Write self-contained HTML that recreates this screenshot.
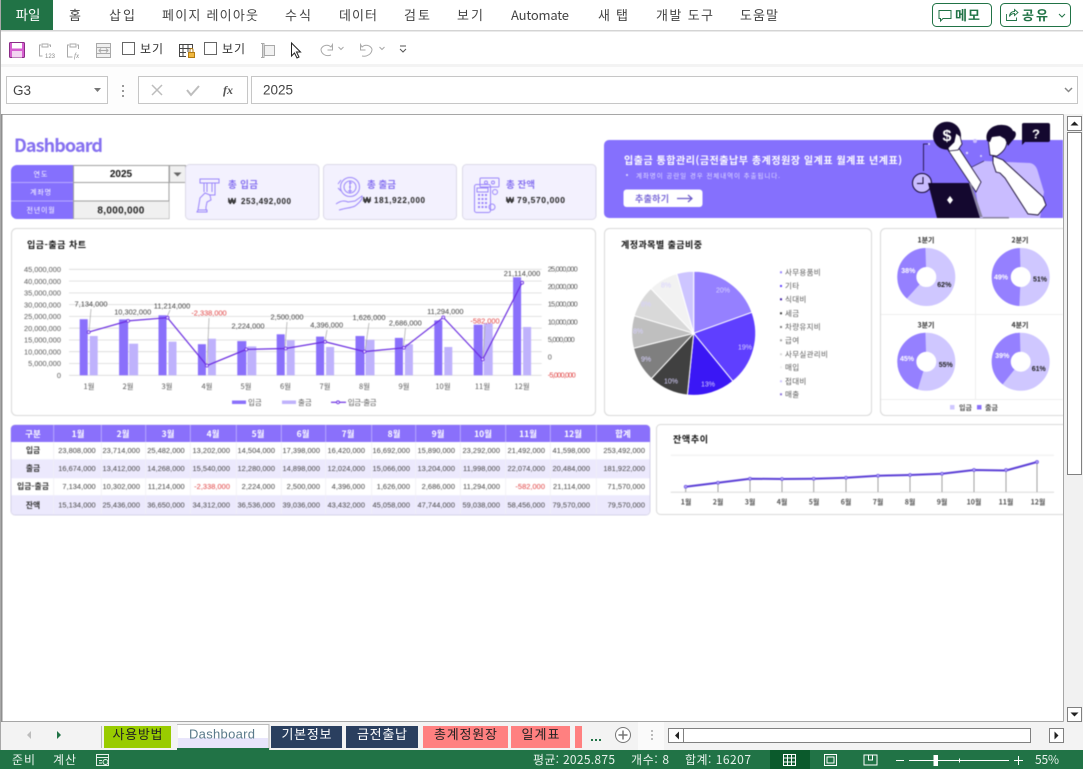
<!DOCTYPE html>
<html lang="ko"><head><meta charset="utf-8"><title>Dashboard</title>
<style>
html,body{margin:0;padding:0;background:#fff;width:1083px;height:769px;overflow:hidden}
svg{display:block;position:absolute;left:0;top:0;font-family:"Liberation Sans","Noto Sans CJK KR",sans-serif}
.ui{fill:#333;font-size:13px;font-family:"Liberation Sans","Noto Sans CJK KR",sans-serif}
.k{font-family:"Noto Sans CJK KR","Liberation Sans",sans-serif}
.ax{font-size:7.4px;fill:#595959}
.mo{font-size:7.5px;fill:#595959;text-anchor:middle}
.dl{font-size:7.4px;fill:#404040;text-anchor:middle}
.t{font-size:7.4px;fill:#444;text-anchor:end;letter-spacing:.05px}
.red{fill:#e04040 !important}
.th{font-size:8.5px;fill:#fff;text-anchor:middle;font-weight:bold}
.rh{font-size:7.8px;fill:#333;text-anchor:middle;font-weight:bold}
.ttl{font-size:9px;fill:#111;font-weight:bold}
.pl{font-size:7px;fill:#d8d2ff;text-anchor:middle}
.lg{font-size:7.5px;fill:#595959}
.dq{font-size:7px;font-weight:bold;text-anchor:middle}
.sh{font-size:13px;text-anchor:middle}
.st{font-size:12px;fill:#e8f2ec}
#dash{filter:blur(.42px)}
</style></head><body>
<svg width="1083" height="769" viewBox="0 0 1083 769" xmlns="http://www.w3.org/2000/svg">
<!-- chrome bg -->
<rect width="1083" height="769" fill="#fff"/>
<rect x="0" y="0" width="53" height="30" fill="#217346"/>
<rect y="30" width="1083" height="1.500" fill="#d4d4d4"/>
<rect y="64" width="1083" height="3" fill="#f3f3f3"/>
<rect y="67" width="1083" height="47" fill="#fdfdfd"/>
<rect x="0" y="0" width="1" height="769" fill="#a8a8a8"/>
<text x="28" y="20" class="k" text-anchor="middle" font-size="13.500" fill="#fff">파일</text>
<g class="k" font-size="13" fill="#444">
<text x="69" y="20" textLength="13">홈</text>
<text x="109" y="20" textLength="26">삽입</text>
<text x="162" y="20" textLength="96">페이지 레이아웃</text>
<text x="285" y="20" textLength="26">수식</text>
<text x="339" y="20" textLength="38">데이터</text>
<text x="404" y="20" textLength="26">검토</text>
<text x="457" y="20" textLength="26">보기</text>
<text x="511" y="20" textLength="58">Automate</text>
<text x="598" y="20" textLength="30">새 탭</text>
<text x="656" y="20" textLength="57">개발 도구</text>
<text x="740" y="20" textLength="38">도움말</text>
</g>
<rect x="932.500" y="3.500" width="59" height="23" rx="4" fill="#fff" stroke="#217346"/>
<path d="M939 10.500h12v8h-8l-2.500 2.500v-2.500h-1.500z" fill="none" stroke="#217346"/>
<text x="955" y="20" class="k" font-size="13" font-weight="bold" fill="#217346" textLength="25">메모</text>
<rect x="1000.500" y="3.500" width="70" height="23" rx="4" fill="#fff" stroke="#217346"/>
<path d="M1006.500 14v6.500h10v-3M1009.500 16.500c0-3 2-5 5-5v-2l3.500 3-3.500 3v-2c-2.500 0-4 1-5 3z" fill="none" stroke="#217346" stroke-width=".9"/>
<text x="1022" y="20" class="k" font-size="13" font-weight="bold" fill="#217346" textLength="26">공유</text>
<path d="M1059 14l3 3 3-3" fill="none" stroke="#217346"/>

<!-- quick access toolbar -->
<g fill="none">
<rect x="9.500" y="42.500" width="15" height="15" rx="1" fill="#d65fd0" stroke="#8a2c86"/>
<rect x="12" y="43" width="10" height="5.500" fill="#fff"/>
<rect x="12" y="51" width="10" height="6.500" fill="#f3d4f1"/>
<g stroke="#a9a9a9">
<path d="M41 45h-1.500v11h3M49 45h1.500v2M42 44h6v3h-6z"/>
<path d="M69 45h-1.500v12h5M77 45h1.500v4M70 44h6v3h-6z"/>
<rect x="96.500" y="43.500" width="14" height="14" fill="#f0f0f0"/>
<path d="M96 47.500h15M96 53.500h15M99 50.500h9M101 48.500l-2 2 2 2M106 48.500l2 2-2 2"/>
<path d="M261 43.500h3v14h-3M262.500 44v13"/>
<rect x="264.500" y="45.500" width="10" height="10" fill="#f2f2f2"/>
<path d="M321 49c2-4 7-5 10-2l1.500-2.500v5.500h-5M321 49c0 5 5 8 10 6"/>
<path d="M372 49c-2-4-7-5-10-2l-1.500-2.500v5.500h5M372 49c0 5-5 8-10 7"/>
<path d="M338.500 47l2.500 2.500 2.500-2.500M379.500 47l2.500 2.500 2.500-2.500"/>
</g>
<text x="45" y="58" font-size="6" fill="#888">123</text>
<text x="74" y="58" font-size="7" font-style="italic" font-family="Liberation Serif" fill="#888">fx</text>
<rect x="122.500" y="42.500" width="12" height="12" stroke="#666" fill="#fff"/>
<rect x="204.500" y="42.500" width="12" height="12" stroke="#666" fill="#fff"/>
<path d="M179 44.500h14M179 48.500h14M179 52.500h7M179 56.500h7M183 44v13M188 44v8M179.500 44v13M192.500 44v5" stroke="#444"/>
<rect x="188.500" y="52.500" width="6" height="5" fill="#f0b840" stroke="#b37a10"/>
<path d="M190 52v-2a1.500 1.500 0 0 1 3 0v2" stroke="#b37a10"/>
<path d="M291.500 43v13l3-3 2.500 5 2-1-2.500-5h4z" fill="#fff" stroke="#222"/>
<path d="M400 46h6M400 49l3 3 3-3" stroke="#555"/>
</g>
<text x="140" y="53" class="k" font-size="12" fill="#333" textLength="23">보기</text>
<text x="222" y="53" class="k" font-size="12" fill="#333" textLength="23">보기</text>

<!-- formula bar -->
<rect x="6.500" y="76.500" width="101" height="27" fill="#fff" stroke="#c6c6c6"/>
<text x="13" y="95" font-size="13.500" fill="#444">G3</text>
<path d="M94 88h7l-3.500 4z" fill="#777"/>
<g fill="#999"><rect x="122" y="85" width="2" height="2"/><rect x="122" y="90" width="2" height="2"/><rect x="122" y="95" width="2" height="2"/></g>
<rect x="138.500" y="76.500" width="109" height="27" fill="#fff" stroke="#c6c6c6"/>
<path d="M152 85l10 10M162 85l-10 10" stroke="#bdbdbd" stroke-width="1.500"/>
<path d="M187 90l4 5 8-9" stroke="#bdbdbd" stroke-width="2" fill="none"/>
<text x="223" y="94" font-size="12" font-style="italic" font-weight="bold" font-family="Liberation Serif" fill="#555">fx</text>
<rect x="251.500" y="76.500" width="826" height="27" fill="#fff" stroke="#c6c6c6"/>
<text x="263" y="94.500" font-size="13.500" fill="#444">2025</text>
<path d="M1065 88l3.500 3.500 3.500-3.500" fill="none" stroke="#888" stroke-width="1.500"/>

<!-- sheet background -->
<rect x="1" y="114" width="1082" height="636" fill="#f2f2f2"/>
<rect x="2" y="115" width="1061" height="606" fill="#fff"/>
<path d="M1.500 114.500H1063.500V721.500H1.500z" fill="none" stroke="#a6a6a6"/>
<rect x="1" y="114" width="1.500" height="608" fill="#8f8f8f"/>

<svg id="dash" x="0" y="0" width="1063" height="721" viewBox="0 0 1063 721" style="overflow:hidden">
<text x="14" y="152" class="k" font-size="18" font-weight="bold" fill="#8570f0" textLength="89">Dashboard</text>

<!-- filter box -->
<path d="M73.500 165H17a6 6 0 0 0-6 6v42a6 6 0 0 0 6 6h56.500z" fill="#8570fd"/>
<path d="M11 182.500h62M11 201h62" stroke="#c9bfff" stroke-width=".8"/>
<rect x="73.500" y="165.500" width="95.500" height="53" fill="#fff" stroke="#a0a0a0"/>
<rect x="74" y="201" width="95" height="17.500" fill="#f0f0f0"/>
<path d="M73.500 182.500H169M73.500 201H169" stroke="#a0a0a0"/>
<rect x="169.500" y="165.500" width="16" height="17" fill="#f0f0f0" stroke="#a0a0a0"/>
<path d="M173.500 172.500h8l-4 4z" fill="#666"/>
<g class="k" font-size="7" fill="#fff" text-anchor="middle">
<text x="41" y="176.500" letter-spacing="1">연도</text><text x="41" y="194.500" letter-spacing=".8">계좌명</text><text x="41" y="212.500" letter-spacing=".8">전년이월</text>
</g>
<text x="121" y="177" font-size="10" font-weight="bold" fill="#111" text-anchor="middle">2025</text>
<text x="121" y="213.500" font-size="10" font-weight="bold" fill="#222" text-anchor="middle" letter-spacing=".3">8,000,000</text>

<!-- cards -->
<g fill="#f3f1fe" stroke="#dcdae8">
<rect x="185.500" y="164.500" width="133.500" height="55" rx="4"/>
<rect x="323.500" y="164.500" width="133" height="55" rx="4"/>
<rect x="462.500" y="164.500" width="133.500" height="55" rx="4"/>
</g>
<g fill="none" stroke="#9a85fb" stroke-width="1">
<path d="M200 179h19v4h-19zM204 183v9M215 183v12h-6M207 183v9M212 183v9"/>
<path d="M198 210l2-12 5-5 5 2 1 5-4 2-1 5v3M198 210h9v2h-10z"/>
<circle cx="350" cy="187" r="9.500"/><circle cx="350" cy="187" r="6"/>
<path d="M349 183h3M349 187h2M348 191h4M350 181v12M338 184l3-4M341 191l-3-3" />
<path d="M336 204c4-3 8-4 12-2l7-1 7-5c1 3-3 7-7 10-4 2-9 2-12 3l-4 1"/>
<rect x="474.500" y="184.500" width="16" height="28" rx="2"/><rect x="477" y="188" width="11" height="4"/>
<path d="M478 195h9M478 199h9M478 203h9M478 207h9" stroke-dasharray="2 1.500" stroke-width="2"/>
<rect x="480" y="178" width="19" height="9" rx="1"/><circle cx="486" cy="182.500" r="1.500"/><circle cx="493" cy="182.500" r="1.500"/>
<circle cx="495" cy="192" r="2.500"/><circle cx="492" cy="207" r="3"/>
</g>
<g class="k" font-size="9.500" font-weight="bold" fill="#8570f0">
<text x="228" y="188" textLength="30">총 입금</text>
<text x="367" y="188" textLength="29">총 출금</text>
<text x="506" y="188" textLength="29">총 잔액</text>
</g>
<g font-size="8.500" font-weight="bold" fill="#222">
<text x="228" y="204">₩</text><text x="241" y="204" textLength="50" font-size="8">253,492,000</text>
<text x="363" y="203">₩</text><text x="374" y="203" textLength="51" font-size="8">181,922,000</text>
<text x="506" y="203">₩</text><text x="517" y="203" textLength="48">79,570,000</text>
</g>

<!-- banner -->
<path d="M609 140H1063V218H609a5 5 0 0 1-5-5V145a5 5 0 0 1 5-5z" fill="#8570fd"/>
<text x="624" y="164" class="k" font-size="10" font-weight="bold" fill="#fff" textLength="278">입출금 통합관리(금전출납부 총계정원장 일계표 월계표 년계표)</text>
<circle cx="627" cy="175" r="1" fill="#e5e0ff"/>
<text x="636" y="178" class="k" font-size="6.500" fill="#e0dbff" textLength="144">계좌명이 공란일 경우 전체내역이 추출됩니다.</text>
<rect x="623.500" y="189.500" width="79" height="17.500" rx="3" fill="#fff"/>
<text x="635" y="202" class="k" font-size="9" font-weight="bold" fill="#7a68d8" textLength="34">추출하기</text>
<path d="M677 198.500h15M688 195l4 3.500-4 3.500" fill="none" stroke="#6a58c8" stroke-width="1.200"/>
<!-- illustration -->
<path d="M928 144h-4.500v27" fill="none" stroke="#14082f" stroke-width=".8"/>
<circle cx="929" cy="144" r="1" fill="#e0dbff"/><circle cx="975" cy="141" r="2" fill="#c9bcff"/><circle cx="967" cy="153" r="1.200" fill="#e0dbff"/><circle cx="981" cy="156" r="1" fill="#e0dbff"/>
<circle cx="922" cy="183" r="9.500" fill="#c9bcff" stroke="#14082f"/>
<path d="M923 177v6.500h-6" fill="none" stroke="#14082f"/>
<!-- shirt -->
<path d="M972 167L984 161 1030 163C1035 164 1037 168 1038 172L1044 192 1040 218H980z" fill="#c9bcff"/>
<path d="M972 167L984 161" stroke="#14082f" stroke-width=".6" fill="none"/>
<!-- left arm -->
<path d="M948 150L958 147 981 182 976 192z" fill="#fff" stroke="#14082f" stroke-width=".8"/>
<circle cx="947" cy="135.700" r="14" fill="#14082f"/>
<text x="947" y="141" font-size="16" font-weight="bold" fill="#fff" text-anchor="middle">$</text>
<path d="M956 133l4 3 2 8-4 6-9 1-1-3 6-6z" fill="#fff" stroke="#14082f" stroke-width=".8"/>
<!-- head -->
<path d="M988 138L990 155 997 156C1003 152 1007 148 1007 140L1000 134z" fill="#fff" stroke="#14082f" stroke-width=".8"/>
<path d="M987 141C984 131 993 124 1003 125 1008 125 1012 128 1013 131 1017 131 1017 137 1012 141L1008 146 1005 139 1000 136 992 137 990 142z" fill="#14082f"/>
<path d="M1022 124a2 2 0 0 1 2-1h24a2 2 0 0 1 2 2v15a2 2 0 0 1-2 2h-23l-3 3z" fill="#14082f"/>
<text x="1036" y="138.500" font-size="13" font-weight="bold" fill="#fff" text-anchor="middle">?</text>
<!-- laptop -->
<path d="M928 183h41l11 35h-43z" fill="#14082f"/>
<path d="M969 183l11 35h3l-12-35zM980 217h29v1.500h-29z" fill="#8a85a0"/>
<path d="M950 196l3 4-3 4-3-4z" fill="#fff"/>
<!-- right forearm -->
<path d="M993 156L1003 160 1043 197 1046 205 1038 215 1028 214 1005 178 1000 173 996 172 993 163z" fill="#fff" stroke="#14082f" stroke-width=".9"/>

<!-- chart panel -->
<rect x="11.500" y="228.500" width="584" height="187" rx="5" fill="#fff" stroke="#d9d9d9"/>
<text x="27" y="248" class="ttl k" textLength="59">입금-출금 차트</text>
<g stroke="#d9d9d9" stroke-width=".8">
<path d="M69 269.300h472.700M69 281.100h472.700M69 292.900h472.700M69 304.600h472.700M69 316.400h472.700M69 328.200h472.700M69 340h472.700M69 351.700h472.700M69 363.500h472.700M69 375.300h472.700"/>
</g>
<g class="ax" text-anchor="end">
<text x="61" y="272">45,000,000</text><text x="61" y="283.800">40,000,000</text><text x="61" y="295.600">35,000,000</text><text x="61" y="307.300">30,000,000</text><text x="61" y="319.100">25,000,000</text><text x="61" y="330.900">20,000,000</text><text x="61" y="342.700">15,000,000</text><text x="61" y="354.400">10,000,000</text><text x="61" y="366.200">5,000,000</text><text x="61" y="378">0</text>
</g>
<g class="ax">
<text x="547.700" y="271.400" textLength="30">25,000,000</text><text x="547.700" y="289" textLength="30">20,000,000</text><text x="547.700" y="306.700" textLength="30">15,000,000</text><text x="547.700" y="324.400" textLength="30">10,000,000</text><text x="547.700" y="342" textLength="27">5,000,000</text><text x="547.700" y="359.700">0</text><text x="547.700" y="377.400" textLength="28" class="ax" style="fill:#e04040">-5,000,000</text>
</g>
<g fill="#8a70fb">
<rect x="79.700" y="319.200" width="8" height="56.100"/><rect x="119.100" y="319.400" width="9" height="55.900"/><rect x="158.500" y="315.300" width="8" height="60"/><rect x="197.900" y="344.200" width="8" height="31.100"/><rect x="237.300" y="341.100" width="9" height="34.200"/><rect x="276.700" y="334.300" width="8" height="41"/><rect x="316.100" y="336.600" width="8" height="38.700"/><rect x="355.500" y="336" width="9" height="39.300"/><rect x="394.900" y="337.900" width="8" height="37.400"/><rect x="434.300" y="320.400" width="8" height="54.900"/><rect x="473.700" y="324.700" width="9" height="50.600"/><rect x="513.100" y="277.300" width="8" height="98"/>
</g>
<g fill="#bfb2fc">
<rect x="89.700" y="336" width="8" height="39.300"/><rect x="129.100" y="343.700" width="9" height="31.600"/><rect x="168.500" y="341.700" width="8" height="33.600"/><rect x="207.900" y="338.700" width="8" height="36.600"/><rect x="247.300" y="346.400" width="9" height="28.900"/><rect x="286.700" y="340.200" width="8" height="35.100"/><rect x="326.100" y="347" width="8" height="28.300"/><rect x="365.500" y="339.800" width="9" height="35.500"/><rect x="404.900" y="344.200" width="8" height="31.100"/><rect x="444.300" y="347" width="8" height="28.300"/><rect x="483.700" y="323.300" width="9" height="52"/><rect x="523.100" y="327" width="8" height="48.300"/>
</g>
<g stroke="#a6a6a6" stroke-width=".7" fill="none">
<path d="M91 309l-2 23M170 310l-3 7M209 318l-2 47M287 322l-2 26M327 330l-2 11M369 323l-4 28M405.500 328l-2 19M485 326l-2 33"/>
</g>
<polyline points="88.700,332.100 128.100,320.900 167.500,317.700 206.900,365.600 246.300,349.400 285.700,348.500 325.100,341.800 364.500,351.600 403.900,347.800 443.300,317.400 482.700,359.400 522.100,282.700" fill="none" stroke="#6a2ce0" stroke-width="1.200"/>
<g fill="#e8e0ff" stroke="#6a2ce0" stroke-width=".8">
<circle cx="88.700" cy="332.100" r="1.500"/><circle cx="128.100" cy="320.900" r="1.500"/><circle cx="167.500" cy="317.700" r="1.500"/><circle cx="206.900" cy="365.600" r="1.500"/><circle cx="246.300" cy="349.400" r="1.500"/><circle cx="285.700" cy="348.500" r="1.500"/><circle cx="325.100" cy="341.800" r="1.500"/><circle cx="364.500" cy="351.600" r="1.500"/><circle cx="403.900" cy="347.800" r="1.500"/><circle cx="443.300" cy="317.400" r="1.500"/><circle cx="482.700" cy="359.400" r="1.500"/><circle cx="522.100" cy="282.700" r="1.500"/>
</g>
<g class="dl">
<text x="91" y="306.400">7,134,000</text><text x="132.700" y="314.700">10,302,000</text><text x="172" y="308.400">11,214,000</text><text x="209" y="315.400" class="dl red">-2,338,000</text><text x="248" y="328.700">2,224,000</text><text x="287" y="319.400">2,500,000</text><text x="326.700" y="327.400">4,396,000</text><text x="369" y="320">1,626,000</text><text x="405.300" y="325.400">2,686,000</text><text x="445.300" y="314">11,294,000</text><text x="485" y="323.400" class="dl red">-582,000</text><text x="522" y="276">21,114,000</text>
</g>
<g class="mo k">
<text x="89" y="389">1월</text><text x="128" y="389">2월</text><text x="167" y="389">3월</text><text x="207" y="389">4월</text><text x="246" y="389">5월</text><text x="285.500" y="389">6월</text><text x="325" y="389">7월</text><text x="364.500" y="389">8월</text><text x="404" y="389">9월</text><text x="443" y="389">10월</text><text x="482.500" y="389">11월</text><text x="522" y="389">12월</text>
</g>
<rect x="232" y="400.500" width="14" height="3.500" fill="#8a70fb"/><text x="248" y="405" class="lg k">입금</text>
<rect x="282" y="400.500" width="14" height="3.500" fill="#bfb2fc"/><text x="298" y="405" class="lg k">출금</text>
<path d="M331 402.300h15" stroke="#6a2ce0" stroke-width="1.200"/><circle cx="338" cy="402.300" r="1.500" fill="#e8e0ff" stroke="#6a2ce0" stroke-width=".8"/><text x="347.700" y="405" class="lg k" textLength="29">입금-출금</text>

<!-- pie panel -->
<rect x="604.500" y="228.500" width="267" height="187" rx="5" fill="#fff" stroke="#d9d9d9"/>
<text x="621" y="248" class="ttl k" textLength="81">계정과목별 출금비중</text>
<g stroke="#fff" stroke-width="1">
<path d="M693.700 333.300V271.300A62 62 0 0 1 752 312.300z" fill="#9580ff"/>
<path d="M693.700 333.300L752 312.300A62 62 0 0 1 732.900 381.300z" fill="#5f3fff"/>
<path d="M693.700 333.300L732.900 381.300A62 62 0 0 1 687.400 395z" fill="#3a17f5"/>
<path d="M693.700 333.300L687.400 395A62 62 0 0 1 651.400 378.600z" fill="#404040"/>
<path d="M693.700 333.300L651.400 378.600A62 62 0 0 1 633.500 348.300z" fill="#7f7f7f"/>
<path d="M693.700 333.300L633.500 348.300A62 62 0 0 1 634.200 315.700z" fill="#bfbfbf"/>
<path d="M693.700 333.300L634.200 315.700A62 62 0 0 1 650.900 288.500z" fill="#d9d9d9"/>
<path d="M693.700 333.300L650.900 288.500A62 62 0 0 1 676.800 273.700z" fill="#f2f2f2"/>
<path d="M693.700 333.300L676.800 273.700A62 62 0 0 1 693.700 271.300z" fill="#cdc5ff"/>
</g>
<g class="pl">
<text x="723" y="292.500">20%</text><text x="745" y="349.500">19%</text><text x="708" y="386.500">13%</text><text x="671" y="383.500">10%</text><text x="646" y="361.500">9%</text><text x="638" y="333.500">8%</text><text x="646" y="306.500">8%</text><text x="666" y="287.500">8%</text>
</g>
<g>
<rect x="780" y="271.300" width="2" height="2" fill="#9580ff"/><rect x="780" y="285" width="2" height="2" fill="#5f3fff"/><rect x="780" y="298.300" width="2" height="2" fill="#3a1aa0"/><rect x="780" y="312.300" width="2" height="2" fill="#404040"/><rect x="780" y="326" width="2" height="2" fill="#7f7f7f"/><rect x="780" y="339.300" width="2" height="2" fill="#a5a5a5"/><rect x="780" y="353.300" width="2" height="2" fill="#d9d9d9"/><rect x="780" y="366.300" width="2" height="2" fill="#f2f2f2"/><rect x="780" y="380.300" width="2" height="2" fill="#cdc5ff"/><rect x="780" y="393.300" width="2" height="2" fill="#8a70db"/>
</g>
<g class="lg k">
<text x="785" y="275" letter-spacing=".3">사무용품비</text><text x="785" y="288.700" letter-spacing=".3">기타</text><text x="785" y="302" letter-spacing=".3">식대비</text><text x="785" y="316" letter-spacing=".3">세금</text><text x="785" y="329.700" letter-spacing=".3">차량유지비</text><text x="785" y="343" letter-spacing=".3">급여</text><text x="785" y="357" letter-spacing=".3">사무실관리비</text><text x="785" y="370" letter-spacing=".3">매입</text><text x="785" y="384" letter-spacing=".3">접대비</text><text x="785" y="397" letter-spacing=".3">매출</text>
</g>

<!-- donut panel -->
<rect x="880.500" y="228.500" width="200" height="187" rx="5" fill="#fff" stroke="#d9d9d9"/>
<path d="M975.500 229v170M881 314.500h182M881 399.500h182" stroke="#eeeeee"/>
<g fill="none" stroke-width="19">
<circle cx="926.300" cy="277" r="19.500" stroke="#cfc7ff"/><circle cx="926.300" cy="277" r="19.500" stroke="#9580ff" pathLength="100" stroke-dasharray="0 62 38 0" transform="rotate(-90 926.300 277)"/>
<circle cx="1020.700" cy="277" r="19.500" stroke="#cfc7ff"/><circle cx="1020.700" cy="277" r="19.500" stroke="#9580ff" pathLength="100" stroke-dasharray="0 51 49 0" transform="rotate(-90 1020.700 277)"/>
<circle cx="926.300" cy="361.700" r="19.500" stroke="#cfc7ff"/><circle cx="926.300" cy="361.700" r="19.500" stroke="#9580ff" pathLength="100" stroke-dasharray="0 55 45 0" transform="rotate(-90 926.300 361.700)"/>
<circle cx="1020.700" cy="361.700" r="19.500" stroke="#cfc7ff"/><circle cx="1020.700" cy="361.700" r="19.500" stroke="#9580ff" pathLength="100" stroke-dasharray="0 61 39 0" transform="rotate(-90 1020.700 361.700)"/>
</g>
<g class="dq">
<text x="908.300" y="273" fill="#fff">38%</text><text x="944.300" y="287" fill="#222">62%</text>
<text x="1001" y="279.500" fill="#fff">49%</text><text x="1040" y="281.500" fill="#222">51%</text>
<text x="907" y="361" fill="#fff">45%</text><text x="945.700" y="367" fill="#222">55%</text>
<text x="1002.300" y="358" fill="#fff">39%</text><text x="1038.700" y="371" fill="#222">61%</text>
</g>
<g class="dq k" fill="#333">
<text x="926" y="242.500">1분기</text><text x="1020" y="242.500">2분기</text><text x="926" y="327.500">3분기</text><text x="1020" y="327.500">4분기</text>
</g>
<rect x="950" y="405" width="4.500" height="4.500" fill="#cfc7ff"/><text x="959" y="410" class="dq k" fill="#555" style="text-anchor:start">입금</text>
<rect x="977" y="405" width="4.500" height="4.500" fill="#8a70fb"/><text x="985" y="410" class="dq k" fill="#555" style="text-anchor:start">출금</text>

<!-- table -->
<path d="M15 425H646a4 4 0 0 1 4 4V511a4 4 0 0 1-4 4H15a4 4 0 0 1-4-4V429a4 4 0 0 1 4-4z" fill="#fff" stroke="#d6d3e8"/>
<path d="M15 425H646a4 4 0 0 1 4 4V442H11V429a4 4 0 0 1 4-4z" fill="#8a70fb"/>
<rect x="11.500" y="459.300" width="638" height="19" fill="#ece9fd"/>
<path d="M11.500 495.300H649.500V511a3.500 3.500 0 0 1-3.500 3.500H15a3.500 3.500 0 0 1-3.500-3.500z" fill="#ece9fd"/>
<g stroke="#c2b6fd" stroke-width=".8"><path d="M53.700 425v17M101.300 425v17M145.700 425v17M190.300 425v17M236.300 425v17M281.300 425v17M325.700 425v17M371.700 425v17M415.700 425v17M460.300 425v17M505.700 425v17M550.300 425v17M596.300 425v17"/></g>
<g stroke="#f0eff6" stroke-width=".8"><path d="M53.700 442v72M101.300 442v72M145.700 442v72M190.300 442v72M236.300 442v72M281.300 442v72M325.700 442v72M371.700 442v72M415.700 442v72M460.300 442v72M505.700 442v72M550.300 442v72M596.300 442v72"/></g>
<g class="th k">
<text x="33" y="437">구분</text><text x="78" y="437">1월</text><text x="123" y="437">2월</text><text x="168" y="437">3월</text><text x="213" y="437">4월</text><text x="258" y="437">5월</text><text x="303" y="437">6월</text><text x="348" y="437">7월</text><text x="394" y="437">8월</text><text x="438" y="437">9월</text><text x="483" y="437">10월</text><text x="528" y="437">11월</text><text x="573" y="437">12월</text><text x="623" y="437">합계</text>
</g>
<g class="rh k">
<text x="33" y="453.200">입금</text><text x="33" y="471.200">출금</text><text x="33" y="489.200" textLength="32">입금-출금</text><text x="33" y="507.900">잔액</text>
</g>
<g class="t">
<text x="95.700" y="453">23,808,000</text><text x="140" y="453">23,714,000</text><text x="184.700" y="453">25,482,000</text><text x="230" y="453">13,202,000</text><text x="275" y="453">14,504,000</text><text x="320" y="453">17,398,000</text><text x="365" y="453">16,420,000</text><text x="410" y="453">16,692,000</text><text x="455" y="453">15,890,000</text><text x="500" y="453">23,292,000</text><text x="545" y="453">21,492,000</text><text x="590" y="453">41,598,000</text><text x="645" y="453">253,492,000</text>
<text x="95.700" y="471">16,674,000</text><text x="140" y="471">13,412,000</text><text x="184.700" y="471">14,268,000</text><text x="230" y="471">15,540,000</text><text x="275" y="471">12,280,000</text><text x="320" y="471">14,898,000</text><text x="365" y="471">12,024,000</text><text x="410" y="471">15,066,000</text><text x="455" y="471">13,204,000</text><text x="500" y="471">11,998,000</text><text x="545" y="471">22,074,000</text><text x="590" y="471">20,484,000</text><text x="645" y="471">181,922,000</text>
<text x="95.700" y="489">7,134,000</text><text x="140" y="489">10,302,000</text><text x="184.700" y="489">11,214,000</text><text x="230" y="489" class="t red">-2,338,000</text><text x="275" y="489">2,224,000</text><text x="320" y="489">2,500,000</text><text x="365" y="489">4,396,000</text><text x="410" y="489">1,626,000</text><text x="455" y="489">2,686,000</text><text x="500" y="489">11,294,000</text><text x="545" y="489" class="t red">-582,000</text><text x="590" y="489">21,114,000</text><text x="645" y="489">71,570,000</text>
<text x="95.700" y="507.700">15,134,000</text><text x="140" y="507.700">25,436,000</text><text x="184.700" y="507.700">36,650,000</text><text x="230" y="507.700">34,312,000</text><text x="275" y="507.700">36,536,000</text><text x="320" y="507.700">39,036,000</text><text x="365" y="507.700">43,432,000</text><text x="410" y="507.700">45,058,000</text><text x="455" y="507.700">47,744,000</text><text x="500" y="507.700">59,038,000</text><text x="545" y="507.700">58,456,000</text><text x="590" y="507.700">79,570,000</text><text x="645" y="507.700">79,570,000</text>
</g>

<!-- balance panel -->
<rect x="656.500" y="424.500" width="440" height="90" rx="4" fill="#fff" stroke="#d9d9d9"/>
<text x="673" y="442.500" class="ttl k" textLength="35">잔액추이</text>
<path d="M670.700 455.300H1054" stroke="#eeeeee"/>
<path d="M670.700 492.300H1054" stroke="#d9d9d9"/>
<g stroke="#a0a0a0"><path d="M685.700 487v5M718 483v9M750 479v13M782 479v13M813.700 479v13M846 478v14M878 476v16M910 475v17M942 474v18M974 470v22M1006 470v22M1037 462v30"/></g>
<polyline points="685.700,486.700 718,482.700 750,478.700 782,479 813.700,478.700 846,477.700 878,475.700 910,475 942,473.700 974,470 1006,470.500 1037,462" fill="none" stroke="#5b3fd6" stroke-width="2" stroke-linejoin="round"/>
<g fill="#b3a4fb" stroke="#6a50e0" stroke-width=".7"><circle cx="685.700" cy="486.700" r="1.500"/><circle cx="718" cy="482.700" r="1.500"/><circle cx="750" cy="478.700" r="1.500"/><circle cx="782" cy="479" r="1.500"/><circle cx="813.700" cy="478.700" r="1.500"/><circle cx="846" cy="477.700" r="1.500"/><circle cx="878" cy="475.700" r="1.500"/><circle cx="910" cy="475" r="1.500"/><circle cx="942" cy="473.700" r="1.500"/><circle cx="974" cy="470" r="1.500"/><circle cx="1006" cy="470" r="1.500"/><circle cx="1037" cy="462" r="1.500"/></g>
<g class="dq k" fill="#555">
<text x="686" y="504.500">1월</text><text x="718" y="504.500">2월</text><text x="750" y="504.500">3월</text><text x="782" y="504.500">4월</text><text x="814" y="504.500">5월</text><text x="846" y="504.500">6월</text><text x="878" y="504.500">7월</text><text x="910" y="504.500">8월</text><text x="942" y="504.500">9월</text><text x="974" y="504.500">10월</text><text x="1006" y="504.500">11월</text><text x="1038" y="504.500">12월</text>
</g>
</svg>

<!-- vertical scrollbar -->
<rect x="1063.500" y="114" width="19.500" height="608" fill="#f1f1f1"/>
<path d="M1063.500 114.500V721.500" stroke="#a6a6a6"/>
<rect x="1067.500" y="116.500" width="14" height="14" fill="#fff" stroke="#808080"/>
<path d="M1070.500 125.500h8l-4-4z" fill="#222"/>
<rect x="1067.500" y="132.500" width="14" height="342" fill="#fff" stroke="#808080"/>
<rect x="1067.500" y="707.500" width="14" height="14" fill="#fff" stroke="#808080"/>
<path d="M1070.500 712.500h8l-4 4z" fill="#222"/>

<!-- sheet tab strip -->
<rect x="1" y="722" width="1082" height="28" fill="#f3f3f3"/>
<path d="M31 731v8l-4-4z" fill="#bdbdbd"/>
<path d="M57 731v8l4-4z" fill="#217346"/>
<path d="M101.500 726v22" stroke="#bbb"/>
<rect x="104" y="726" width="67" height="22" fill="#99cc00"/>
<text x="137.500" y="739" class="sh k" fill="#222" textLength="50">사용방법</text>
<path d="M177 724.500h92v25" fill="none" stroke="#bbb"/>
<rect x="178" y="725" width="90" height="24" fill="#fff"/>
<rect x="178" y="738" width="90" height="10" fill="#e8e5fb"/>
<path d="M177 749h92" stroke="#217346" stroke-width="2"/>
<text x="222" y="738.500" class="sh" font-size="13" fill="#5a7a8a" textLength="66">Dashboard</text>
<rect x="271" y="726" width="71" height="22" fill="#2a3f5f"/>
<text x="306.500" y="739" class="sh k" fill="#fff" textLength="50">기본정보</text>
<rect x="346" y="726" width="72" height="22" fill="#2a3f5f"/>
<text x="382" y="739" class="sh k" fill="#fff" textLength="50">금전출납</text>
<rect x="423" y="726" width="85" height="22" fill="#ff8080"/>
<text x="465.500" y="739" class="sh k" fill="#222" textLength="63">총계정원장</text>
<rect x="511" y="726" width="59" height="22" fill="#ff8080"/>
<text x="540.500" y="739" class="sh k" fill="#222" textLength="38">일계표</text>
<rect x="575" y="726" width="7" height="22" fill="#ff8080"/>
<g fill="#217346"><rect x="591" y="739" width="2" height="2"/><rect x="595" y="739" width="2" height="2"/><rect x="599" y="739" width="2" height="2"/></g>
<circle cx="623" cy="735" r="7.500" fill="#fff" stroke="#777"/>
<path d="M618.500 735h9M623 730.500v9" stroke="#777" stroke-width="1.500"/>
<rect x="638" y="722" width="26" height="28" fill="#fafafa"/>
<g fill="#bbb"><rect x="651" y="730" width="2" height="2"/><rect x="651" y="734" width="2" height="2"/><rect x="651" y="738" width="2" height="2"/></g>
<rect x="668.500" y="728.500" width="362" height="14" fill="#fff" stroke="#808080"/>
<path d="M683.500 729v13" stroke="#808080"/>
<path d="M679 731.500v8l-4-4z" fill="#222"/>
<rect x="1049.500" y="728.500" width="14" height="14" fill="#fff" stroke="#808080"/>
<path d="M1054.500 731.500v8l4-4z" fill="#222"/>

<!-- status bar -->
<rect y="750" width="1083" height="19" fill="#217346"/>
<g class="st k">
<text x="12" y="764" textLength="23">준비</text>
<text x="53" y="764" textLength="23">계산</text>
<text x="533" y="764" textLength="82">평균: 2025.875</text>
<text x="631" y="764" textLength="38">개수: 8</text>
<text x="685" y="764" textLength="66">합계: 16207</text>
<text x="1035" y="764" textLength="24">55%</text>
</g>
<g fill="none" stroke="#e8f2ec">
<rect x="96.500" y="754.500" width="12" height="11"/><path d="M96 757.500h13M99 760.500h3M99 763h3"/><circle cx="105.500" cy="762" r="2.500"/>
</g>
<rect x="770" y="750" width="40" height="19" fill="#0b5a2c"/>
<g fill="none" stroke="#fff">
<path d="M783.500 754.500h12v11h-12zM787.500 755v10M791.500 755v10M784 758h11M784 762h11"/>
<rect x="824.500" y="754.500" width="12" height="11"/><rect x="827" y="757" width="7" height="6"/>
<path d="M864 755h13v10h-13zM868.500 755v5h4v-5"/>
<path d="M896 760.500h8M1014 760.500h9M1018.500 756v9M909 760.500h100M959.500 758.500v4"/>
</g>
<rect x="933.500" y="755" width="4.500" height="11" fill="#fff"/>
</svg>
</body></html>
